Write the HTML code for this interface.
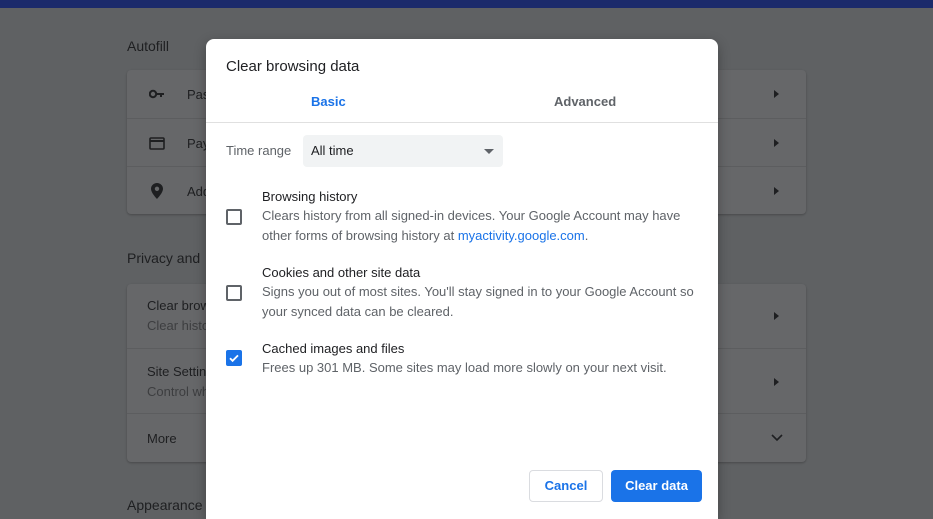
<!DOCTYPE html>
<html style="width:933px;height:519px;overflow:hidden"><head><style>
*{margin:0;padding:0;box-sizing:border-box}
body{width:933px;height:519px;overflow:hidden;background:#5f6163;font-family:"Liberation Sans",sans-serif;position:relative;color:#1c1d1f}
.top{position:absolute;left:0;top:0;width:933px;height:8px;background:#1b2a6b}
.h{position:absolute;left:127px;font-size:14px;color:#1e1f21}
.card{position:absolute;left:127px;width:679px;background:#666769;border-radius:4px;box-shadow:0 1px 2px rgba(0,0,0,.25)}
.row{position:absolute;left:0;width:679px;border-top:1px solid #5c5d5f}
.t{position:absolute;left:20px;font-size:13px;color:#1e1f21}
.s{position:absolute;left:20px;font-size:13px;color:#3d3e40}
.arr{position:absolute;left:647px;width:0;height:0;border-top:4px solid transparent;border-bottom:4px solid transparent;border-left:5px solid #1e1f21}
.dlg{position:absolute;left:206px;top:39px;width:512px;height:480px;background:#fff;border-radius:8px 8px 0 0;box-shadow:0 4px 12px rgba(0,0,0,.3)}
.dlg div{position:absolute}
.cb{width:16px;height:16px;border:2px solid #5f6368;border-radius:2px;left:20px}
.ti{left:56px;font-size:13px;color:#202124}
.de{left:56px;font-size:13px;color:#5f6368;line-height:20px;width:440px}
</style></head><body>
<div class="top"></div>
<div class="h" style="top:38px">Autofill</div>
<div class="card" style="top:70px;height:144px">
 <svg style="position:absolute;left:22px;top:19px" width="16" height="10" viewBox="0 0 16 10"><circle cx="4" cy="5" r="3.2" fill="none" stroke="#1e1f21" stroke-width="2"/><path d="M7 4h8v2h-2v2h-2V6H7z" fill="#1e1f21"/></svg>
 <div class="t" style="left:60px;top:17px">Pas</div>
 <div class="arr" style="top:20px"></div>
 <div class="row" style="top:48px;height:48px">
  <svg style="position:absolute;left:22px;top:18px" width="16" height="13" viewBox="0 0 16 13"><rect x="1" y="1" width="14" height="11" rx="1" fill="none" stroke="#1e1f21" stroke-width="1.6"/><rect x="1" y="3" width="14" height="2" fill="#1e1f21"/></svg>
  <div class="t" style="left:60px;top:17px">Pay</div><div class="arr" style="top:20px"></div></div>
 <div class="row" style="top:96px;height:48px">
  <svg style="position:absolute;left:24px;top:16px" width="12" height="16" viewBox="0 0 12 16"><path d="M6 0C2.7 0 0 2.6 0 5.8 0 10 6 16 6 16s6-6 6-10.2C12 2.6 9.3 0 6 0zm0 8a2.2 2.2 0 110-4.4A2.2 2.2 0 016 8z" fill="#1e1f21"/></svg>
  <div class="t" style="left:60px;top:17px">Add</div><div class="arr" style="top:20px"></div></div>
</div>
<div class="h" style="top:250px">Privacy and</div>
<div class="card" style="top:284px;height:178px">
 <div class="t" style="top:14px">Clear brow</div><div class="s" style="top:34px">Clear histo</div><div class="arr" style="top:28px"></div>
 <div class="row" style="top:64px;height:65px"><div class="t" style="top:15px">Site Settin</div><div class="s" style="top:35px">Control wh</div><div class="arr" style="top:29px"></div></div>
 <div class="row" style="top:129px;height:49px"><div class="t" style="top:17px">More</div>
 <svg style="position:absolute;left:644px;top:20px" width="12" height="8" viewBox="0 0 12 8"><path d="M1 1l5 5 5-5" fill="none" stroke="#1e1f21" stroke-width="1.6"/></svg></div>
</div>
<div class="h" style="top:497px">Appearance</div>

<div class="dlg">
 <div style="left:20px;top:19px;font-size:15px;color:#202124">Clear browsing data</div>
 <div style="left:105px;top:55px;font-size:13px;font-weight:bold;color:#1a73e8">Basic</div>
 <div style="left:348px;top:55px;font-size:13px;font-weight:bold;color:#5f6368">Advanced</div>
 <div style="left:0;top:83px;width:512px;height:1px;background:#e0e0e0"></div>
 <div style="left:20px;top:104px;font-size:13px;color:#5f6368">Time range</div>
 <div style="left:97px;top:96px;width:200px;height:32px;background:#f1f3f4;border-radius:4px">
  <div style="left:8px;top:8px;font-size:13px;color:#202124">All time</div>
  <div style="left:181px;top:14px;width:0;height:0;border-left:5px solid transparent;border-right:5px solid transparent;border-top:5px solid #5f6368"></div>
 </div>
 <div class="ti" style="top:150px">Browsing history</div>
 <div class="cb" style="top:170px"></div>
 <div class="de" style="top:167px">Clears history from all signed-in devices. Your Google Account may have other forms of browsing history at <span style="color:#1a73e8">myactivity.google.com</span>.</div>
 <div class="ti" style="top:226px">Cookies and other site data</div>
 <div class="cb" style="top:246px"></div>
 <div class="de" style="top:243px">Signs you out of most sites. You'll stay signed in to your Google Account so your synced data can be cleared.</div>
 <div class="ti" style="top:302px">Cached images and files</div>
 <div class="cb" style="top:311px;background:#1a73e8;border-color:#1a73e8"><svg style="position:absolute;left:0;top:0" width="12" height="12" viewBox="0 0 12 12"><path d="M2 6.2l2.6 2.6L10 3.4" fill="none" stroke="#fff" stroke-width="1.8"/></svg></div>
 <div class="de" style="top:319px">Frees up 301 MB. Some sites may load more slowly on your next visit.</div>
 <div style="left:323px;top:431px;width:74px;height:32px;border:1px solid #dadce0;border-radius:4px;color:#1a73e8;font-size:13px;font-weight:bold;text-align:center;line-height:30px">Cancel</div>
 <div style="left:405px;top:431px;width:91px;height:32px;background:#1a73e8;border-radius:4px;color:#fff;font-size:13px;font-weight:bold;text-align:center;line-height:32px">Clear data</div>
</div>
</body></html>
